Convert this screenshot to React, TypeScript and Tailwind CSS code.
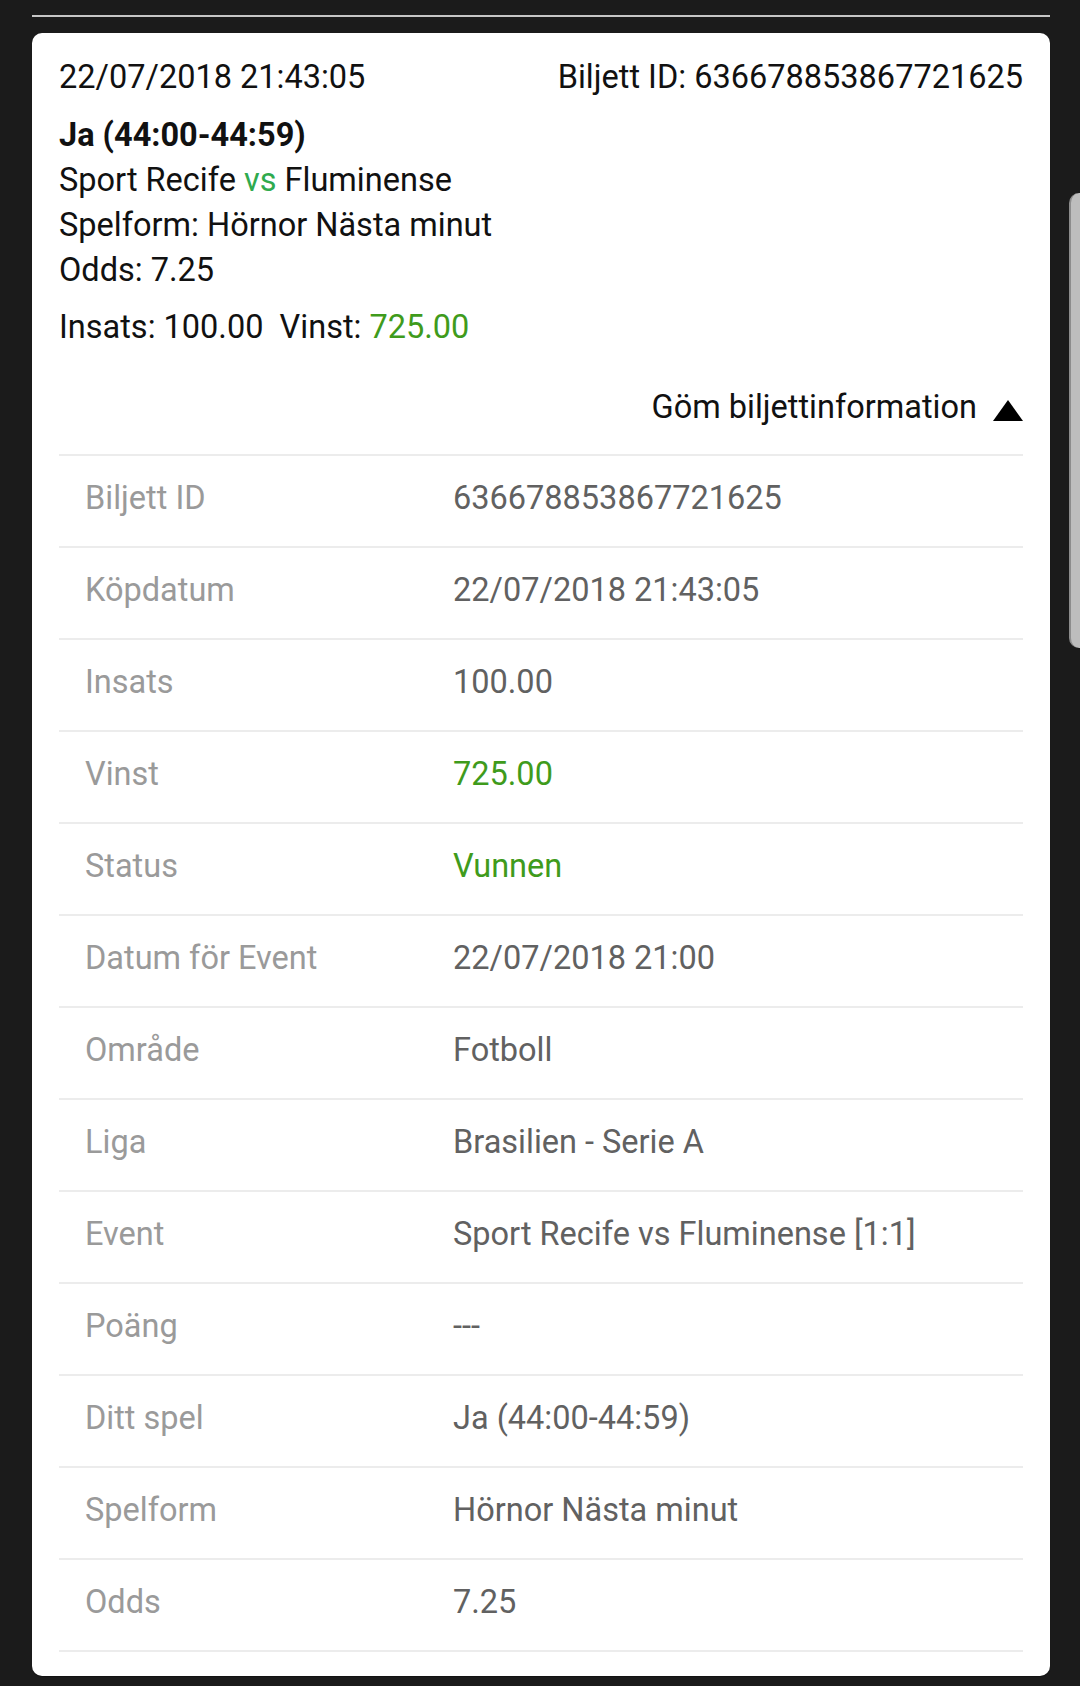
const rows: { label: string; value: string; green?: boolean }[] = [
  { label: 'Biljett ID', value: '636678853867721625' },
  { label: 'Köpdatum', value: '22/07/2018 21:43:05' },
  { label: 'Insats', value: '100.00' },
  { label: 'Vinst', value: '725.00', green: true },
  { label: 'Status', value: 'Vunnen', green: true },
  { label: 'Datum för Event', value: '22/07/2018 21:00' },
  { label: 'Område', value: 'Fotboll' },
  { label: 'Liga', value: 'Brasilien - Serie A' },
  { label: 'Event', value: 'Sport Recife vs Fluminense [1:1]' },
  { label: 'Poäng', value: '---' },
  { label: 'Ditt spel', value: 'Ja (44:00-44:59)' },
  { label: 'Spelform', value: 'Hörnor Nästa minut' },
  { label: 'Odds', value: '7.25' },
];

export default function App() {
  return (
    <div
      className="relative w-[1080px] h-[1686px] overflow-hidden bg-[#1b1b1b] pt-[15px]"
      style={{ fontFamily: 'Roboto, "Noto Sans", sans-serif' }}
    >
      <div className="ml-[32px] w-[1018px] h-[2px] bg-[#c6c6c6]" />

      <div className="ml-[32px] mt-[16px] w-[1018px] bg-white rounded-[10px] shadow-[0_1px_1px_rgba(0,0,0,0.35)] px-[27px] pt-[22px] pb-[24px] text-[32.5px] leading-[45px] text-[#111]">
        <div className="flex justify-between">
          <span>22/07/2018 21:43:05</span>
          <span>Biljett ID: 636678853867721625</span>
        </div>

        <div className="mt-[13px]">
          <div className="font-bold">Ja (44:00-44:59)</div>
          <div>
            Sport Recife <span className="text-[#2faa4e]">vs</span> Fluminense
          </div>
          <div>Spelform: Hörnor Nästa minut</div>
          <div>Odds: 7.25</div>
        </div>

        <div className="mt-[12px]">
          Insats: 100.00&nbsp;&nbsp;Vinst: <span className="text-[#3f9b1c]">725.00</span>
        </div>

        <div className="mt-[35px] flex items-center justify-end gap-[16px]">
          <span>Göm biljettinformation</span>
          <svg width="30" height="21" viewBox="0 0 30 21" className="mt-[6px]">
            <polygon points="15,0 30,21 0,21" fill="#000" />
          </svg>
        </div>

        <div className="mt-[24px] border-t-2 border-[#ececec]">
          {rows.map((row) => (
            <div
              key={row.label}
              className="flex items-center h-[92px] pb-[5px] border-b-2 border-[#ececec] pl-[26px]"
            >
              <span className="w-[368px] text-[#9a9a9a]">{row.label}</span>
              <span className={row.green ? 'text-[#3f9b1c]' : 'text-[#616161]'}>
                {row.value}
              </span>
            </div>
          ))}
        </div>
      </div>

      <div className="absolute left-[1069px] top-[193px] w-[20px] h-[455px] bg-[#bdbdbd] rounded-l-[10px] border-l-2 border-[#8c8c8c]" />
    </div>
  );
}
